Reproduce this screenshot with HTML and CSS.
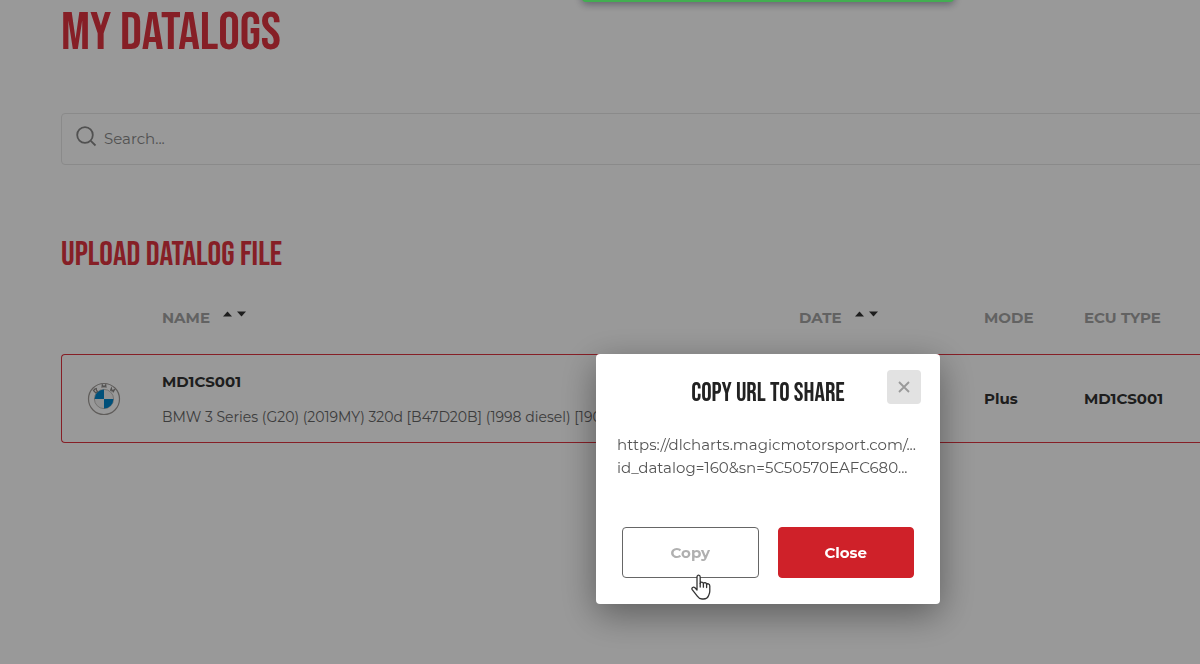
FILE: index.html
```html
<!DOCTYPE html>
<html lang="en">
<head>
  <meta charset="UTF-8" />
  <title>My Datalogs</title>
  <meta name="viewport" content="width=device-width, initial-scale=1.0" />
  <link rel="stylesheet" href="styles.css">
</head>
<body>
  <main class="page">
    <h1>My Datalogs</h1>
    <label class="search">
      <svg width="22" height="22" viewBox="0 0 22 22" fill="none" stroke="currentColor" stroke-width="1.8" aria-hidden="true">
        <circle cx="9" cy="9" r="7.8" />
        <path d="M14.8 14.8L19.5 19.5" />
      </svg>
      <input type="text" placeholder="Search..." aria-label="Search" />
    </label>

    <h2>Upload Datalog File</h2>
    <table class="datalogs">
      <thead>
        <tr>
          <th class="col-logo"></th>
          <th class="col-name">NAME
            <svg class="sort" width="24" height="6" viewBox="0 0 24 6" fill="currentColor" aria-hidden="true">
              <path d="M0 5.5L4.5 0.5L9 5.5Z" />
              <path d="M14 0.5H23L18.5 5.5Z" />
            </svg>
          </th>
          <th class="col-date">DATE
            <svg class="sort" width="24" height="6" viewBox="0 0 24 6" fill="currentColor" aria-hidden="true">
              <path d="M0 5.5L4.5 0.5L9 5.5Z" />
              <path d="M14 0.5H23L18.5 5.5Z" />
            </svg>
          </th>
          <th class="col-mode">MODE</th>
          <th>ECU TYPE</th>
        </tr>
      </thead>
      <tbody>
        <tr>
          <td class="logo">
            <svg width="34" height="34" viewBox="0 0 34 34" aria-hidden="true">
              <circle cx="17" cy="17" r="15.5" fill="none" stroke="#a09c98" stroke-width="1.2" />
              <circle cx="17" cy="17" r="9.6" fill="#f4f4f4" stroke="#b0aeac" stroke-width="0.8" />
              <path d="M17 17V7.6A9.4 9.4 0 0 0 7.6 17Z" fill="#0086cc" />
              <path d="M17 17V26.4A9.4 9.4 0 0 0 26.4 17Z" fill="#0086cc" />
              <g fill="none" stroke="#8a8886" stroke-width="1.2">
                <path d="M6.5 8.5L8.8 11L10.6 9.4L9.4 8.2L9.3 6.6L7.8 7Z" />
                <path d="M15 5.8L15.3 2.8L17 5L18.7 2.8L19 5.8" />
                <path d="M23.4 8.8L24.4 6.2L25 8.8L27.4 7.8L25.9 10.4" />
              </g>
            </svg>
          </td>
          <td>
            <strong>MD1CS001</strong>
            <p>BMW 3 Series (G20) (2019MY) 320d [B47D20B] (1998 diesel) [190</p>
          </td>
          <td></td>
          <td><strong>Plus</strong></td>
          <td><strong>MD1CS001</strong></td>
        </tr>
      </tbody>
    </table>
  </main>

  <div class="backdrop">
    <div class="toast" role="status"></div>
    <div class="modal" role="dialog" aria-labelledby="modalTitle">
      <button class="modal-x" type="button" aria-label="Close dialog">
        <svg width="12" height="12" viewBox="0 0 12 12" stroke="currentColor" stroke-width="1.8">
          <path d="M1 1L11 11M11 1L1 11" />
        </svg>
      </button>
      <h3 id="modalTitle">Copy URL to share</h3>
      <p class="url">https://dlcharts.magicmotorsport.com/...<br />id_datalog=160&amp;sn=5C50570EAFC680...</p>
      <div class="actions">
        <button class="btn btn-outline" type="button">Copy</button>
        <button class="btn btn-red" type="button">Close</button>
      </div>
      <svg class="pointer" width="20" height="26" viewBox="0 0 20 26" fill="#fff" stroke="#333" stroke-width="1.3" stroke-linejoin="round" stroke-linecap="round" aria-hidden="true">
        <path d="M6 16V3C6 0.5 9.2 0.5 9.2 3V9.5C9.4 7.4 12.4 7.6 12.4 9.8C12.8 8 15.6 8.4 15.6 10.6C16.2 9.2 18.8 9.6 18.8 12V17C18.8 19.5 18 20.5 17.4 22C16.5 24.3 15 25 12.5 25H11C8.5 25 7.5 24 6.3 22.2L1.2 15.6C0.2 13.8 2.4 12.3 4 13.8Z" />
        <path d="M9.2 9.5V13M12.4 9.8V13.2M15.6 10.6V13.6" fill="none" />
      </svg>
    </div>
  </div>
</body>
</html>
```
FILE: styles.css
```css
:root {
  --red: #cf2129;
  --title-red: #e03440;
  --grey: #a4a4a4;
  --dark: #333;
  --title-font: "Bebas Neue", "Roboto Condensed", "Liberation Sans Narrow", "Open Sans Condensed", sans-serif;
}
* {
  box-sizing: border-box;
}
body {
  margin: 0;
  min-height: 100vh;
  overflow: hidden;
  background: #fff;
  color: var(--dark);
  font-family: Montserrat, Inter, sans-serif;
  font-size: 15px;
}
h1, h2, h3, p {
  margin: 0;
}
h1, h2, h3 {
  font-family: var(--title-font);
  font-weight: 400;
  text-transform: uppercase;
}
/* the layout runs wider than the window */
.page {
  width: 128vw;
  padding: 0 61px;
}
h1 {
  color: var(--title-red);
  font-size: 54px;
  line-height: 66px;
}
.search {
  display: flex;
  align-items: center;
  gap: 6px;
  height: 52px;
  margin-top: 47px;
  padding: 0 14px;
  border: 1px solid #e6e6e6;
  border-radius: 4px;
  color: #888;
}
.search svg {
  margin-bottom: 4px;
}
.search input {
  flex: 1;
  padding: 0 0 2px;
  border: none;
  outline: none;
  background: none;
  font: inherit;
}
.search input::placeholder {
  color: #888;
}
h2 {
  margin-top: 70px;
  color: var(--title-red);
  font-size: 34px;
  line-height: 40px;
}
.datalogs {
  width: 100%;
  margin-top: 26px;
  border-spacing: 0;
  table-layout: fixed;
}
.col-logo {
  width: 101px;
}
.col-name {
  width: 637px;
}
.col-date {
  width: 185px;
}
.col-mode {
  width: 100px;
}
th {
  height: 53px;
  padding: 7px 0 0;
  vertical-align: top;
  text-align: left;
  color: var(--grey);
  font-weight: 700;
  line-height: 20px;
}
.sort {
  margin-left: 9px;
  vertical-align: 6px;
  color: var(--dark);
}
td {
  height: 89px;
  padding: 0;
  border: solid var(--title-red);
  border-width: 1px 0;
  white-space: nowrap;
}
td:first-child {
  border-left-width: 1px;
  border-radius: 4px 0 0 4px;
}
td:last-child {
  border-right-width: 1px;
  border-radius: 0 4px 4px 0;
}
td p {
  margin-top: 17px;
  color: #666;
  font-size: 14px;
}
.logo {
  padding-left: 25px;
}
.logo svg {
  display: block;
}
.backdrop {
  position: fixed;
  top: 0;
  left: 0;
  width: 128vw;
  height: 100vh;
  display: flex;
  flex-direction: column;
  align-items: center;
  background: rgba(0, 0, 0, 0.4);
}
.toast {
  width: 372px;
  height: 48px;
  margin-top: -46px;
  flex: none;
  border-radius: 4px;
  background: #43ad52;
  box-shadow: 0 2px 8px rgba(0, 0, 30, 0.4);
}
.modal {
  position: relative;
  width: 344px;
  margin-top: 352px;
  padding: 23px 21px 26px;
  border-radius: 4px;
  background: #fff;
  box-shadow: 0 10px 36px rgba(0, 0, 0, 0.4);
}
h3 {
  color: #222;
  font-size: 26px;
  line-height: 34px;
  text-align: center;
}
.modal-x {
  position: absolute;
  top: 16px;
  right: 19px;
  width: 34px;
  height: 34px;
  display: flex;
  align-items: center;
  justify-content: center;
  padding: 0;
  border: none;
  border-radius: 4px;
  background: #e2e2e2;
  color: #999;
  cursor: pointer;
}
.url {
  margin-top: 22px;
  color: #555;
  line-height: 23px;
  white-space: nowrap;
}
.actions {
  display: flex;
  gap: 19px;
  margin-top: 48px;
  padding: 0 5px;
}
.btn {
  flex: 1;
  height: 51px;
  border: 1px solid var(--red);
  border-radius: 4px;
  font: inherit;
  font-weight: 700;
  cursor: pointer;
}
.btn-outline {
  border-color: #666;
  background: #fff;
  color: #b0b0b0;
}
.btn-red {
  background: var(--red);
  color: #fff;
}
.pointer {
  position: absolute;
  top: 220px;
  left: 95px;
}
```
